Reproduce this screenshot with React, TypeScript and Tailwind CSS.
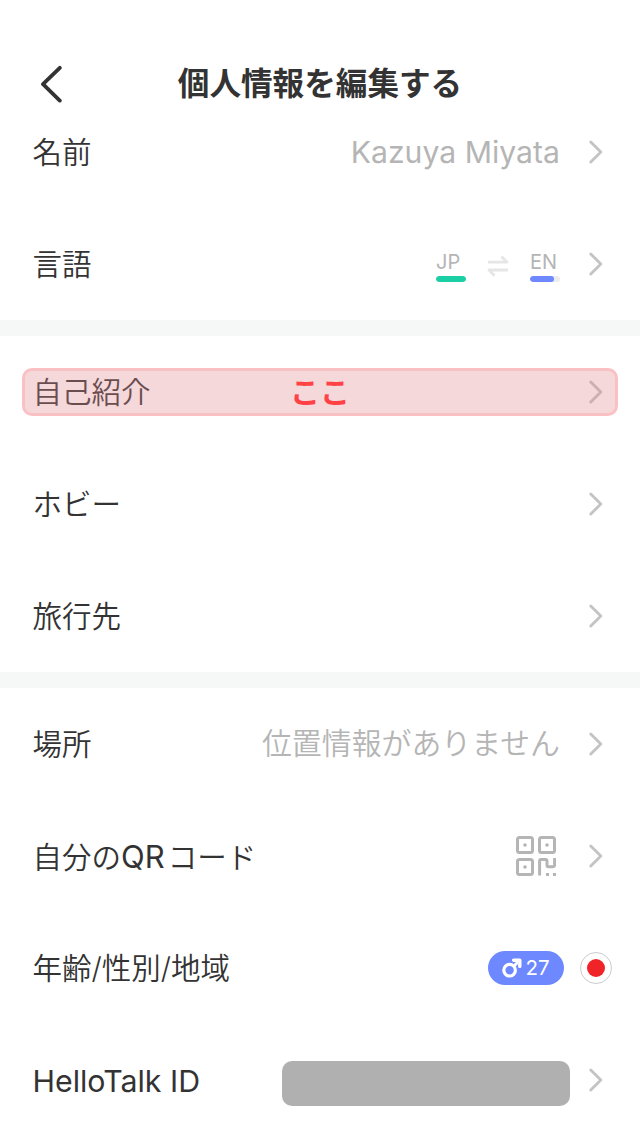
import type { ReactNode } from "react";

// ─── Icons ────────────────────────────────────────────────────────────────────

function BackIcon() {
  return (
    <svg width="24" height="38" viewBox="0 0 24 38" fill="none">
      <path d="M20.8 2.8L4 19.2L20.8 35.6" stroke="#333333" strokeWidth="3.8" strokeLinecap="round" strokeLinejoin="round" />
    </svg>
  );
}

function ChevronIcon() {
  return (
    <svg width="16" height="24" viewBox="0 0 16 24" fill="none" className="shrink-0">
      <path d="M2.8 2L12.8 12L2.8 22" stroke="#c4c4c4" strokeWidth="2.9" strokeLinecap="round" strokeLinejoin="round" />
    </svg>
  );
}

function ExchangeIcon() {
  return (
    <svg width="22" height="22" viewBox="0 0 22 22" fill="none">
      <path d="M1 7.2H20L14.5 1.5" stroke="#e6e6e6" strokeWidth="2.8" strokeLinejoin="round" />
      <path d="M21 15H2L7.5 20.7" stroke="#e6e6e6" strokeWidth="2.8" strokeLinejoin="round" />
    </svg>
  );
}

function QrIcon() {
  return (
    <svg width="40" height="40" viewBox="0 0 40 40" fill="none">
      <g stroke="#b5b5b5" strokeWidth="3">
        <rect x="1.5" y="1.5" width="15" height="15" rx="2" />
        <rect x="23.5" y="1.5" width="15" height="15" rx="2" />
        <rect x="1.5" y="23.5" width="15" height="15" rx="2" />
        <path d="M23.6 39.5V25Q23.6 23.4 25.2 23.4H29.5Q31 23.4 31 25V29Q31 30.7 32.6 30.7H37Q38.6 30.7 38.6 29V22" />
      </g>
      <g fill="#b5b5b5">
        <circle cx="9" cy="9" r="1.8" />
        <circle cx="31" cy="9" r="1.8" />
        <circle cx="9" cy="31" r="1.8" />
        <rect x="30" y="37" width="3" height="3" />
        <rect x="37" y="37" width="3" height="3" />
      </g>
    </svg>
  );
}

function MaleIcon() {
  return (
    <svg width="20" height="20" viewBox="0 0 20 20" fill="none">
      <circle cx="7.6" cy="12.2" r="5.8" stroke="#ffffff" strokeWidth="3.2" />
      <path d="M12 8L16 4" stroke="#ffffff" strokeWidth="3" />
      <path d="M11.6 2.2H17.8V8.4" stroke="#ffffff" strokeWidth="3.4" strokeLinecap="round" strokeLinejoin="round" />
    </svg>
  );
}

// ─── Row primitives ───────────────────────────────────────────────────────────

function Row({
  label,
  children,
  arrow = true,
  highlight,
}: {
  label: ReactNode;
  children?: ReactNode;
  arrow?: boolean;
  highlight?: string;
}) {
  return (
    <div className="relative flex h-28 items-center justify-between pl-[32.5px] pr-[36px]">
      <span className="pt-0.5 text-[29.5px] leading-none font-[350] whitespace-nowrap text-[#333333]">{label}</span>
      <div className="flex items-center">
        {children}
        {arrow && (
          <div className="ml-7">
            <ChevronIcon />
          </div>
        )}
      </div>
      {highlight && (
        <div className="absolute inset-x-[22px] top-8 flex h-12 items-center justify-center rounded-[10px] border-3 border-[#f9c1c3] bg-[#e0858b]/32">
          <span className="text-[30px] leading-none font-bold text-[#ff4245]">{highlight}</span>
        </div>
      )}
    </div>
  );
}

function Divider() {
  return <div className="h-4 bg-[#f6f8f8]" />;
}

function Language({ code, bar }: { code: string; bar: ReactNode }) {
  return (
    <div className="flex w-[30px] flex-col">
      <span className="text-[20px] leading-6 text-[#b5b5b5]">{code}</span>
      <div className="mt-[2px] h-[6px] overflow-hidden rounded-full bg-[#ececec]">{bar}</div>
    </div>
  );
}

// ─── Page ─────────────────────────────────────────────────────────────────────

export default function App() {
  return (
    <div className="h-[1136px] w-[640px] overflow-hidden bg-white font-['Inter','Noto_Sans_CJK_JP',sans-serif]">
      <header className="-mb-2 grid h-[104px] grid-cols-[100px_1fr_100px] items-center pt-[63px]">
        <button className="flex h-[38px] items-center pl-[39px]" aria-label="戻る">
          <BackIcon />
        </button>
        <h1 className="text-center text-[31.6px] leading-none font-bold whitespace-nowrap text-[#333333]">
          個人情報を編集する
        </h1>
      </header>

      <Row label="名前">
        <span className="text-[30.2px] leading-none text-[#b5b5b5]">Kazuya Miyata</span>
      </Row>
      <Row label="言語">
        <div className="flex items-center pt-1">
          <Language code="JP" bar={<div className="h-full w-full rounded-full bg-[#1bcfa5]" />} />
          <div className="mx-[21px]">
            <ExchangeIcon />
          </div>
          <Language code="EN" bar={<div className="h-full w-6 rounded-full bg-[#6e88ff]" />} />
        </div>
      </Row>

      <Divider />

      <Row label="自己紹介" highlight="ここ" />
      <Row label="ホビー" />
      <Row label="旅行先" />

      <Divider />

      <Row label="場所">
        <span className="text-[29.9px] leading-none font-[350] text-[#b5b5b5]">位置情報がありません</span>
      </Row>
      <Row
        label={
          <>
            自分の<span className="mr-[3px] text-[31px] leading-none font-normal">QR</span>コード
          </>
        }
      >
        <div className="mr-1">
          <QrIcon />
        </div>
      </Row>
      <Row label="年齢/性別/地域" arrow={false}>
        <div className="-mr-2 flex items-center gap-4">
          <div className="flex h-[34px] w-[76px] items-center justify-center gap-[3px] rounded-full bg-[#6e88ff]">
            <MaleIcon />
            <span className="text-[20.5px] leading-none text-white">27</span>
          </div>
          <div className="flex size-8 items-center justify-center rounded-full border border-[#cccccc]">
            <div className="size-[18px] rounded-full bg-[#f02428]" />
          </div>
        </div>
      </Row>
      <Row label={<span className="text-[30.3px] leading-none font-normal">HelloTalk ID</span>}>
        <div className="mt-[7px] -mr-[10px] h-[45px] w-72 rounded-[10px] bg-[#b0b0b0]" />
      </Row>
    </div>
  );
}
